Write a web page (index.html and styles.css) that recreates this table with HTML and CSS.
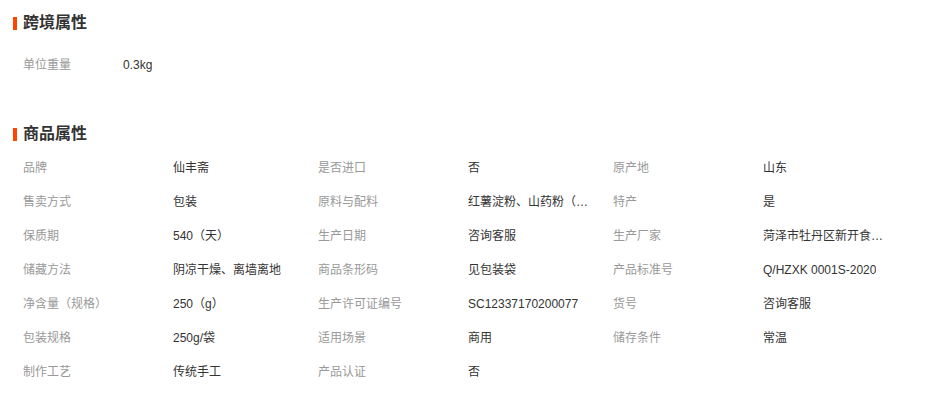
FILE: index.html
```html
<!DOCTYPE html>
<html lang="zh-CN">
<head>
<meta charset="utf-8">
<link rel="stylesheet" href="styles.css">
</head>
<body>
<div class="page">
  <section class="section">
    <h2 class="title"><span class="bar"></span>跨境属性</h2>
    <div class="list simple">
      <div class="item"><span class="label">单位重量</span><span class="value">0.3kg</span></div>
    </div>
  </section>
  <section class="section second">
    <h2 class="title"><span class="bar"></span>商品属性</h2>
    <div class="list grid">
      <div class="item"><span class="label">品牌</span><span class="value">仙丰斋</span></div>
      <div class="item"><span class="label">是否进口</span><span class="value">否</span></div>
      <div class="item"><span class="label">原产地</span><span class="value">山东</span></div>
      <div class="item"><span class="label">售卖方式</span><span class="value">包装</span></div>
      <div class="item"><span class="label">原料与配料</span><span class="value">红薯淀粉、山药粉（山药粉、水）</span></div>
      <div class="item"><span class="label">特产</span><span class="value">是</span></div>
      <div class="item"><span class="label">保质期</span><span class="value">540（天）</span></div>
      <div class="item"><span class="label">生产日期</span><span class="value">咨询客服</span></div>
      <div class="item"><span class="label">生产厂家</span><span class="value">菏泽市牡丹区新开食品厂</span></div>
      <div class="item"><span class="label">储藏方法</span><span class="value">阴凉干燥、离墙离地</span></div>
      <div class="item"><span class="label">商品条形码</span><span class="value">见包装袋</span></div>
      <div class="item"><span class="label">产品标准号</span><span class="value">Q/HZXK 0001S-2020</span></div>
      <div class="item"><span class="label">净含量（规格）</span><span class="value">250（g）</span></div>
      <div class="item"><span class="label">生产许可证编号</span><span class="value">SC12337170200077</span></div>
      <div class="item"><span class="label">货号</span><span class="value">咨询客服</span></div>
      <div class="item"><span class="label">包装规格</span><span class="value">250g/袋</span></div>
      <div class="item"><span class="label">适用场景</span><span class="value">商用</span></div>
      <div class="item"><span class="label">储存条件</span><span class="value">常温</span></div>
      <div class="item"><span class="label">制作工艺</span><span class="value">传统手工</span></div>
      <div class="item"><span class="label">产品认证</span><span class="value">否</span></div>
    </div>
  </section>
</div>
</body>
</html>
```
FILE: styles.css
```css
* { box-sizing: border-box; }
html, body { margin: 0; padding: 0; background: #fff; }
body {
  font-family: "Liberation Sans", "Noto Sans CJK SC", sans-serif;
  font-size: 12px;
  color: #333;
}
.page { padding: 13px 0 0 13px; width: 948px; }
.title {
  display: flex;
  align-items: center;
  gap: 6px;
  margin: 0;
  height: 20px;
  line-height: 20px;
  font-size: 16px;
  font-weight: bold;
  color: #333;
}
.bar { width: 4px; height: 13px; background: #ff4400; display: block; }
.list { padding-left: 10px; }
.simple { margin-top: 15px; }
.item { display: flex; height: 34px; line-height: 34px; }
.label { color: #999; flex: none; }
.simple .label { width: 100px; }
.value {
  color: #333;
  white-space: nowrap;
  overflow: hidden;
  text-overflow: ellipsis;
  max-width: 124px;
}
.second { margin-top: 42px; }
.grid {
  margin-top: 7px;
  display: grid;
  grid-template-columns: 295px 295px 295px;
}
.grid .label { width: 150px; }
```
